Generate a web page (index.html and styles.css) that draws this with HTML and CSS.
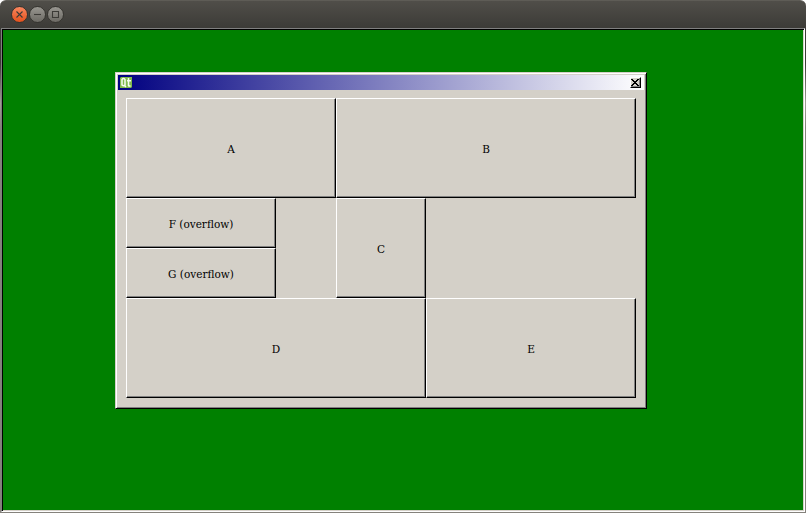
FILE: index.html
```html
<!DOCTYPE html>
<html lang="en">
<head>
<meta charset="utf-8">
<title>Border layout</title>
<link rel="stylesheet" href="styles.css">
</head>
<body>
<div class="window">
  <header class="chrome">
    <span class="ctl close"><svg viewBox="0 0 17 17"><path d="M5.500 5.500l6 6M11.500 5.500l-6 6"/></svg></span>
    <span class="ctl"><svg viewBox="0 0 17 17"><path d="M5 8.500h7"/></svg></span>
    <span class="ctl"><svg viewBox="0 0 17 17"><path d="M5.500 5.500h6v6h-6z"/></svg></span>
  </header>
  <main class="frame">
    <div class="desktop">
      <section class="dialog">
        <div class="titlebar">
          <svg class="logo" viewBox="0 0 12 11"><path fill="#80b84c" d="M1 0h11v10l-1 1H0V1z"/><path fill="none" stroke="#f8fcf2" stroke-width="1.500" d="M2 2.500Q3.500.5 5 2.500v5.500Q3.500 9.500 2 8zM4 8l2 2M8.500 1v7.500q.5.800 2 .3M7 3.700h4"/></svg>
          <button class="x" aria-label="Close"><svg viewBox="0 0 8 7" shape-rendering="crispEdges"><path d="M0 0h2v1h1v1h2V1h1V0h2v1H7v1H6v1H5v1h1v1h1v1h1v1H6V6H5V5H3v1H2v1H0V6h1V5h1V4h1V3H2V2H1V1H0z"/></svg></button>
        </div>
        <div class="grid">
          <div class="cell a">A</div>
          <div class="cell b">B</div>
          <div class="cell f">F (overflow)</div>
          <div class="cell g">G (overflow)</div>
          <div class="cell c">C</div>
          <div class="cell d">D</div>
          <div class="cell e">E</div>
        </div>
      </section>
    </div>
  </main>
</div>
</body>
</html>
```
FILE: styles.css
```css
* { box-sizing: border-box; }
html { background: #fff; }
body { margin: 0; font: 11.7px "DejaVu Serif Condensed", "DejaVu Serif", serif; font-stretch: condensed; color: #000; }
.window { width: 806px; height: 513px; display: flex; flex-direction: column; }
.chrome {
  height: 28px; display: flex; align-items: center; gap: 1px; padding: 0 0 1px 11px;
  background: linear-gradient(#504e49, #3c3b37); border-radius: 6px 6px 0 0;
  border-top: 1px solid #5e5c56;
}
.ctl {
  width: 17px; height: 17px; border-radius: 50%; border: 1px solid #35342f;
  background: linear-gradient(#989690, #6c6a64); display: flex;
}
.ctl svg { width: 17px; height: 17px; margin: -1px; flex: none; fill: none; stroke: #3c3b37; stroke-width: 1.1; }
.close { background: linear-gradient(#f9875f, #e4511c); }
.frame {
  flex: 1; padding: 0 1px 1px 1px;
  background: linear-gradient(#3c3b37, #3c3b37 35px, #a09d97 75px, #85827c 100px);
}
.desktop {
  height: 100%; background: #008000; border: 1px solid; border-color: #808080 #fff #fff #808080;
  box-shadow: inset 1px 1px #000, inset -1px -1px #d4d0c8;
  padding: 43px 0 0 113px;
}
.dialog {
  width: 532px; height: 337px; background: #d4d0c8; padding: 2px;
  border: 1px solid; border-color: #d4d0c8 #000 #000 #d4d0c8;
  box-shadow: inset 1px 1px #fff, inset -1px -1px #808080;
}
.titlebar {
  width: 526px; height: 15px; display: flex; align-items: center; justify-content: space-between;
  padding: 0 3px 0 2px; background: linear-gradient(90deg, #000080, #fff);
}
.logo { width: 12px; height: 11px; }
.x {
  width: 11px; height: 11px; padding: 0 1px 1px 0; display: grid; place-items: center; background: #d4d0c8;
  border: 1px solid; border-color: #fff #000 #000 #fff; box-shadow: inset -1px -1px #808080;
}
.x svg { width: 8px; height: 7px; display: block; }
.grid {
  margin: 8px 0 0 8px; width: 510px; height: 300px; display: grid;
  grid-template: 100px 50px 50px 100px / 150px 60px 90px 210px;
}
.cell {
  display: flex; align-items: center; justify-content: center; padding: 2px 0 0;
  border: 1px solid; border-color: #fff #000 #000 #fff; box-shadow: inset -1px -1px #808080;
}
.a { grid-area: 1 / 1 / 2 / 3; }
.b { grid-area: 1 / 3 / 2 / 5; }
.f { grid-area: 2 / 1; }
.g { grid-area: 3 / 1; }
.c { grid-area: 2 / 3 / 4 / 4; }
.d { grid-area: 4 / 1 / 5 / 4; }
.e { grid-area: 4 / 4; }
```
